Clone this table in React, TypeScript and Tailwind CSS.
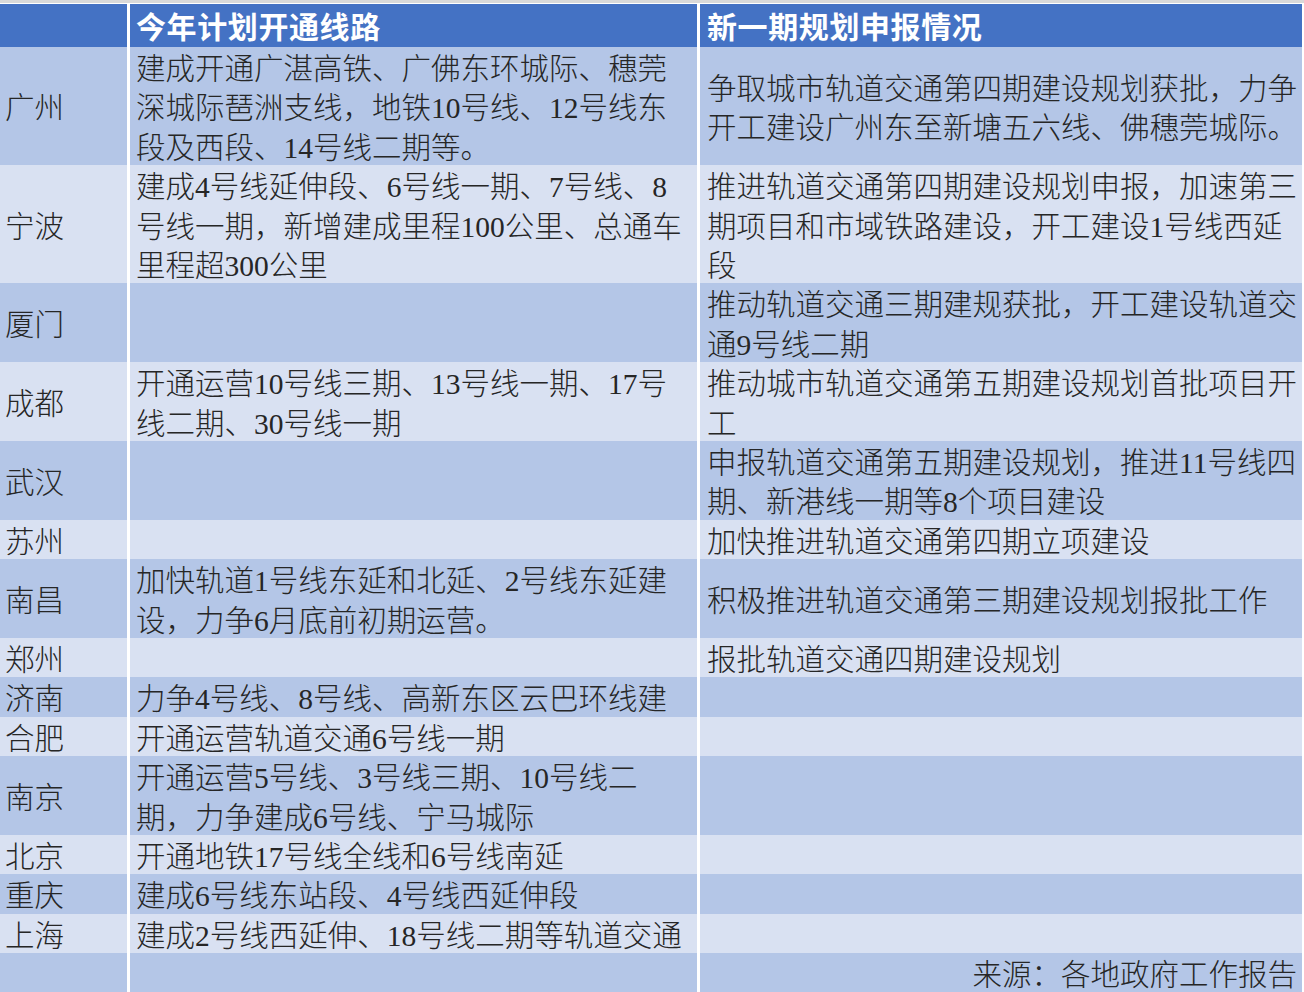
import React from "react";

type Row = {
  city: string;
  plan: string[];
  apply: string[];
  lines: 1 | 2 | 3;
};

const rows: Row[] = [
  {
    city: "广州",
    plan: ["建成开通广湛高铁、广佛东环城际、穗莞", "深城际琶洲支线，地铁10号线、12号线东", "段及西段、14号线二期等。"],
    apply: ["争取城市轨道交通第四期建设规划获批，力争", "开工建设广州东至新塘五六线、佛穗莞城际。"],
    lines: 3,
  },
  {
    city: "宁波",
    plan: ["建成4号线延伸段、6号线一期、7号线、8", "号线一期，新增建成里程100公里、总通车", "里程超300公里"],
    apply: ["推进轨道交通第四期建设规划申报，加速第三", "期项目和市域铁路建设，开工建设1号线西延", "段"],
    lines: 3,
  },
  { city: "厦门", plan: [], apply: ["推动轨道交通三期建规获批，开工建设轨道交", "通9号线二期"], lines: 2 },
  {
    city: "成都",
    plan: ["开通运营10号线三期、13号线一期、17号", "线二期、30号线一期"],
    apply: ["推动城市轨道交通第五期建设规划首批项目开", "工"],
    lines: 2,
  },
  { city: "武汉", plan: [], apply: ["申报轨道交通第五期建设规划，推进11号线四", "期、新港线一期等8个项目建设"], lines: 2 },
  { city: "苏州", plan: [], apply: ["加快推进轨道交通第四期立项建设"], lines: 1 },
  {
    city: "南昌",
    plan: ["加快轨道1号线东延和北延、2号线东延建", "设，力争6月底前初期运营。"],
    apply: ["积极推进轨道交通第三期建设规划报批工作"],
    lines: 2,
  },
  { city: "郑州", plan: [], apply: ["报批轨道交通四期建设规划"], lines: 1 },
  { city: "济南", plan: ["力争4号线、8号线、高新东区云巴环线建"], apply: [], lines: 1 },
  { city: "合肥", plan: ["开通运营轨道交通6号线一期"], apply: [], lines: 1 },
  { city: "南京", plan: ["开通运营5号线、3号线三期、10号线二", "期，力争建成6号线、宁马城际"], apply: [], lines: 2 },
  { city: "北京", plan: ["开通地铁17号线全线和6号线南延"], apply: [], lines: 1 },
  { city: "重庆", plan: ["建成6号线东站段、4号线西延伸段"], apply: [], lines: 1 },
  { city: "上海", plan: ["建成2号线西延伸、18号线二期等轨道交通"], apply: [], lines: 1 },
];

const heights = { 1: "h-[37.4px]", 2: "h-[76.8px]", 3: "h-[116.2px]" };

const Lines: React.FC<{ items: string[] }> = ({ items }) => (
  <div>
    {items.map((t, i) => (
      <div key={i} className="whitespace-nowrap">
        {t}
      </div>
    ))}
  </div>
);

export default function App() {
  return (
    <div
      className="w-[1304px] h-[992px] overflow-hidden bg-white text-[29.5px] leading-[39.4px] text-[#262626] font-light"
      style={{ fontFamily: '"Liberation Serif", "Noto Sans CJK SC", serif' }}
    >
      <div className="h-[3px] bg-[#d9d9d9]" />
      <div className="mt-[1px] grid grid-cols-[127px_567px_602px] gap-x-[3px] h-[38px]">
        <div className="bg-[#4472c4]" />
        <div className="bg-[#4472c4] flex items-center pl-[6px] pt-[4px] text-white font-bold text-[30px] tracking-[0.6px]">
          今年计划开通线路
        </div>
        <div className="bg-[#4472c4] flex items-center pl-[7px] pt-[4px] text-white font-bold text-[30px] tracking-[0.6px]">
          新一期规划申报情况
        </div>
      </div>
      <div className="mt-[5px] flex flex-col gap-y-[2px]">
        {rows.map((r, i) => {
          const bg = i % 2 === 0 ? "bg-[#b4c6e7]" : "bg-[#d9e1f2]";
          return (
            <div key={r.city} className={`grid grid-cols-[127px_567px_602px] gap-x-[3px] ${heights[r.lines]}`}>
              <div className={`${bg} flex items-center pl-[5px] pt-[3px]`}>{r.city}</div>
              <div className={`${bg} flex items-center pl-[6px] pt-[3px]`}>
                <Lines items={r.plan} />
              </div>
              <div className={`${bg} flex items-center pl-[7px] pt-[3px]`}>
                <Lines items={r.apply} />
              </div>
            </div>
          );
        })}
        <div className="grid grid-cols-[127px_567px_602px] gap-x-[3px] h-[37.4px]">
          <div className="bg-[#b4c6e7]" />
          <div className="bg-[#b4c6e7]" />
          <div className="bg-[#b4c6e7] flex items-center justify-end pr-[5px] pt-[3px]">来源：各地政府工作报告</div>
        </div>
      </div>
    </div>
  );
}
